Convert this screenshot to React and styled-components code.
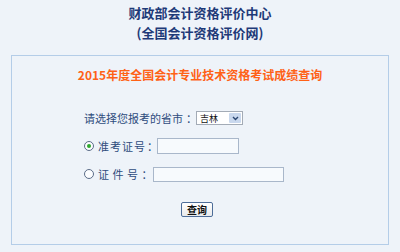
import React from 'react';
import styled, { createGlobalStyle } from 'styled-components';

const GlobalStyle = createGlobalStyle`
  html, body {
    margin: 0;
    padding: 0;
    background: #eef3f9;
  }
  body {
    font-family: "Noto Sans CJK SC", "Liberation Sans", sans-serif;
  }
`;

const Page = styled.div`
  width: 400px;
  height: 252px;
  padding-top: 3px;
  box-sizing: border-box;
`;

const Header = styled.div`
  text-align: center;
  color: #1e3a78;
  font-size: 13px;
  font-weight: bold;
  line-height: 20px;
`;

const Panel = styled.div`
  margin: 12px 11px 0;
  height: 190px;
  box-sizing: border-box;
  border: 1px solid #b4cde8;
  padding-top: 9px;
  display: flex;
  flex-direction: column;
`;

const Title = styled.div`
  text-align: center;
  color: #ff6116;
  font-size: 12px;
  font-weight: bold;
  line-height: 20px;
`;

const Form = styled.div`
  margin-top: 22px;
  padding-left: 72px;
  display: flex;
  flex-direction: column;
  gap: 6px;
`;

const Row = styled.div`
  height: 22px;
  display: flex;
  align-items: center;
`;

const Label = styled.span`
  flex-shrink: 0;
  width: ${(p) => p.$width}px;
  color: #2f4c7d;
  font-size: 11px;
  letter-spacing: ${(p) => p.$spacing || 0}px;
  white-space: pre;
`;

const Colon = styled.span`
  margin-left: ${(p) => p.$gap || 0}px;
  letter-spacing: 0;
`;

const Radio = styled.input.attrs({ type: 'radio' })`
  appearance: none;
  flex-shrink: 0;
  margin: 0 4px 0 0;
  width: 10px;
  height: 10px;
  border-radius: 50%;
  border: 1px solid #5b6c88;
  background: #fbfcfe;
  box-sizing: border-box;
  display: grid;
  place-content: center;

  &:checked::after {
    content: '';
    width: 4px;
    height: 4px;
    border-radius: 50%;
    background: #2ea82e;
  }
`;

const Select = styled.div`
  width: 47px;
  height: 14px;
  box-sizing: border-box;
  border: 1px solid #a3abb6;
  background: #fff;
  display: flex;
  align-items: center;
  justify-content: space-between;
  padding: 0 1px 0 3px;
  font-size: 9px;
  color: #111;
`;

const Arrow = styled.span`
  width: 12px;
  height: 10px;
  background: #c9d8ee;
  border-radius: 1px;
  display: grid;
  place-content: center;
`;

const TextBox = styled.input.attrs({ type: 'text' })`
  width: ${(p) => p.$width}px;
  height: ${(p) => p.$height}px;
  box-sizing: border-box;
  margin: 0;
  padding: 0 2px;
  border: 1px solid #a9b7ca;
  background: #f7fafd;
  outline: none;
`;

const Submit = styled.button`
  align-self: center;
  margin: 17px 0 0 -6px;
  width: 32px;
  height: 15px;
  padding: 0;
  border: 1px solid #4d6d99;
  border-radius: 2px;
  background: linear-gradient(#ffffff, #e9eaec);
  color: #111;
  font-family: "Noto Sans CJK SC", sans-serif;
  font-size: 10px;
  font-weight: bold;
  line-height: 13px;
`;

export default function App() {
  return (
    <Page>
      <GlobalStyle />
      <Header>
        <div>财政部会计资格评价中心</div>
        <div>(全国会计资格评价网)</div>
      </Header>
      <Panel>
        <Title>2015年度全国会计专业技术资格考试成绩查询</Title>
        <Form>
          <Row>
            <Label $width={112}>
              请选择您报考的省市<Colon $gap={3}>：</Colon>
            </Label>
            <Select>
              吉林
              <Arrow>
                <svg width="7" height="5" viewBox="0 0 7 5">
                  <path d="M1 1l2.5 2.5L6 1" fill="none" stroke="#2a4670" strokeWidth="1.4" />
                </svg>
              </Arrow>
            </Select>
          </Row>
          <Row>
            <Radio name="qtype" defaultChecked />
            <Label $width={59} $spacing={1}>
              准考证号<Colon $gap={1}>：</Colon>
            </Label>
            <TextBox $width={82} $height={16} />
          </Row>
          <Row>
            <Radio name="qtype" />
            <Label $width={55} $spacing={3.5}>
              证件号<Colon>：</Colon>
            </Label>
            <TextBox $width={131} $height={15} />
          </Row>
        </Form>
        <Submit>查询</Submit>
      </Panel>
    </Page>
  );
}
